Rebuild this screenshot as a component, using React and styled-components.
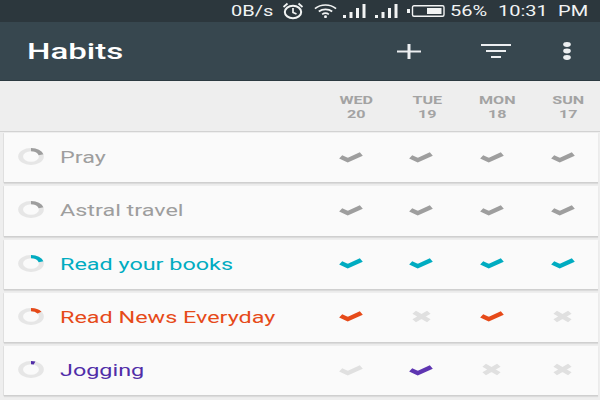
import React from "react";
import styled, { createGlobalStyle } from "styled-components";

const Global = createGlobalStyle`
  html, body { margin: 0; padding: 0; background: #eeeeee; }
  body { font-family: Roboto, "Liberation Sans", sans-serif; }
`;

const Screen = styled.div`
  width: 600px;
  height: 400px;
  overflow: hidden;
  background: #eeeeee;
  display: flex;
  flex-direction: column;
`;

const StatusBar = styled.div`
  height: 22px;
  flex: none;
  background: #2c373d;
  color: #f2f4f4;
  display: flex;
  align-items: center;
  justify-content: flex-end;
  padding-right: 11px;
  font-size: 14px;
  white-space: nowrap;
`;

const StatusText = styled.span`
  display: block;
  flex: none;
  width: ${(p) => p.$w}px;
  margin-left: ${(p) => p.$ml || 0}px;
  transform: scaleX(1.43);
  transform-origin: left center;
`;

const StatusIcon = styled.svg`
  margin-left: ${(p) => p.$ml || 0}px;
  flex: none;
  display: block;
`;

const Toolbar = styled.div`
  height: 58px;
  flex: none;
  background: #37474f;
  border-bottom: 1px solid #2c3a41;
  display: flex;
  align-items: center;
  padding-left: 26.5px;
`;

const Title = styled.div`
  color: #ffffff;
  font-size: 22px;
  font-weight: 500;
  flex: 1;
  transform: scaleX(1.5);
  transform-origin: left center;
`;

const ToolButton = styled.svg`
  flex: none;
  display: block;
  margin-right: ${(p) => p.$mr}px;
`;

const DayHeader = styled.div`
  height: 51px;
  flex: none;
  display: flex;
  align-items: center;
  padding-left: 321px;
  padding-top: 1px;
  box-sizing: border-box;
  border-bottom: 1px solid #d2d2d2;
`;

const Day = styled.div`
  width: 70.5px;
  flex: none;
  text-align: center;
  color: #a3a3a3;
  font-size: 11.5px;
  font-weight: 700;
  line-height: 14px;
  transform: scaleX(1.4);
`;

const List = styled.div`
  display: flex;
  flex-direction: column;
  gap: 3px;
  padding: 1px 2px 0 4px;
`;

const Card = styled.div`
  height: 50.25px;
  flex: none;
  background: #fafafa;
  border-bottom: 1px solid #cfcfcf;
  box-shadow: 0 1px 1px rgba(0, 0, 0, 0.08), -1px 0 0 #e2e2e2;
  box-sizing: border-box;
  display: flex;
  align-items: center;
  padding-left: 14px;
`;

const Ring = styled.svg`
  flex: none;
  display: block;
  margin-top: -2px;
`;

const Name = styled.div`
  flex: 1;
  margin-left: 16px;
  margin-top: -1px;
  font-size: 17px;
  color: ${(p) => p.$color};
  transform: scaleX(1.375);
  transform-origin: left center;
`;

const Cell = styled.div`
  width: 70.7px;
  flex: none;
  display: flex;
  justify-content: center;
`;

const Mark = styled.svg`
  display: block;
  margin-top: -2px;
`;

const GREY = "#9e9e9e";
const OFF = "#e0e0e0";

const Check = ({ color }) => (
  <Mark width="24" height="14" viewBox="0 0 17 14" preserveAspectRatio="none">
    <path d="M1.200 6.800 L6.200 10.200 L15.800 4" fill="none" stroke={color} strokeWidth="3.900" />
  </Mark>
);

const Cross = () => (
  <Mark width="19" height="13" viewBox="0 0 13 13" preserveAspectRatio="none">
    <path d="M1.500 2.300 L11.500 10.700 M11.500 2.300 L1.500 10.700" fill="none" stroke={OFF} strokeWidth="3.800" />
  </Mark>
);

const Progress = ({ color, angle }) => {
  const a = ((angle - 90) * Math.PI) / 180;
  const x1 = 8.5 + 6.8 * Math.cos(a);
  const y1 = 8.5 + 6.8 * Math.sin(a);
  return (
    <Ring width="26" height="17" viewBox="0 0 17 17" preserveAspectRatio="none">
      <circle cx="8.500" cy="8.500" r="6.800" fill="none" stroke="#e6e6e6" strokeWidth="3.200" />
      <path d={`M8.500 1.700 A6.800 6.800 0 0 1 ${x1} ${y1}`} fill="none" stroke={color} strokeWidth="3.200" />
    </Ring>
  );
};

const habits = [
  { name: "Pray", color: "#9e9e9e", ring: "#9e9e9e", angle: 75, marks: "cccc", on: GREY },
  { name: "Astral travel", color: "#9e9e9e", ring: "#9e9e9e", angle: 75, marks: "cccc", on: GREY },
  { name: "Read your books", color: "#00acc1", ring: "#00acc1", angle: 75, marks: "cccc", on: "#00acc1" },
  { name: "Read News Everyday", color: "#e64a19", ring: "#e64a19", angle: 55, marks: "cxcx", on: "#e64a19" },
  { name: "Jogging", color: "#512da8", ring: "#512da8", angle: 20, marks: "lcxx", on: "#5e35b1" },
];

const days = [
  ["WED", 20],
  ["TUE", 19],
  ["MON", 18],
  ["SUN", 17],
];

const Bars = () => (
  <path d="M1 11h3v3H1zM7.500 8h3v6h-3zM14 4h3v10h-3zM20.500 0h3v14h-3z" fill="#f2f4f4" />
);

export default function App() {
  return (
    <Screen>
      <Global />
      <StatusBar>
        <StatusText $w={45}>0B/s</StatusText>
        <StatusIcon $ml={6} width="22" height="18" viewBox="0 0 22 18">
          <ellipse cx="11" cy="10" rx="8.200" ry="6.200" fill="none" stroke="#f2f4f4" strokeWidth="2" />
          <path d="M11 6v4.400l3.500 1.600M1.500 5 5.500 1.500M20.500 5 16.500 1.500" fill="none" stroke="#f2f4f4" strokeWidth="1.700" />
        </StatusIcon>
        <StatusIcon $ml={10} width="23" height="14" viewBox="0 0 24 14">
          <path d="M1 4.500C7 -.5 17 -.5 23 4.500M5 7.500C9 4.500 15 4.500 19 7.500M8.500 10.500C10.500 9 13.500 9 15.500 10.500" fill="none" stroke="#f2f4f4" strokeWidth="1.800" />
          <circle cx="12" cy="13" r="1.500" fill="#f2f4f4" />
        </StatusIcon>
        <StatusIcon $ml={5} width="24" height="14" viewBox="0 0 24 14"><Bars /></StatusIcon>
        <StatusIcon $ml={8} width="24" height="14" viewBox="0 0 24 14"><Bars /></StatusIcon>
        <StatusIcon $ml={9} width="38" height="12" viewBox="0 0 38 12">
          <path d="M0 4h3v4H0z" fill="#f2f4f4" />
          <rect x="5.500" y=".8" width="31.500" height="10.400" rx="1.500" fill="none" stroke="#f2f4f4" strokeWidth="1.400" />
          <rect x="20" y="3" width="14.500" height="6" fill="#f2f4f4" />
        </StatusIcon>
        <StatusText $w={40} $ml={5}>56%</StatusText>
        <StatusText $w={52} $ml={8}>10:31</StatusText>
        <StatusText $w={31} $ml={8}>PM</StatusText>
      </StatusBar>

      <Toolbar>
        <Title>Habits</Title>
        <ToolButton $mr={60} width="24" height="15" viewBox="0 0 24 15">
          <path d="M0 7.500h24" stroke="#eceff1" strokeWidth="2" />
          <path d="M12 0v15" stroke="#eceff1" strokeWidth="3" />
        </ToolButton>
        <ToolButton $mr={52} width="30" height="14" viewBox="0 0 30 14">
          <path d="M0 1h30M5 7h20M10 13h10" stroke="#eceff1" strokeWidth="2" />
        </ToolButton>
        <ToolButton $mr={29} width="8" height="18" viewBox="0 0 8 18">
          <ellipse cx="4" cy="2.500" rx="3.800" ry="2.400" fill="#eceff1" />
          <ellipse cx="4" cy="9" rx="3.800" ry="2.400" fill="#eceff1" />
          <ellipse cx="4" cy="15.500" rx="3.800" ry="2.400" fill="#eceff1" />
        </ToolButton>
      </Toolbar>

      <DayHeader>
        {days.map(([d, n]) => (
          <Day key={d}>
            {d}
            <br />
            {n}
          </Day>
        ))}
      </DayHeader>

      <List>
        {habits.map((h) => (
          <Card key={h.name}>
            <Progress color={h.ring} angle={h.angle} />
            <Name $color={h.color}>{h.name}</Name>
            {[...h.marks].map((m, i) => (
              <Cell key={i}>
                {m === "c" && <Check color={h.on} />}
                {m === "l" && <Check color={OFF} />}
                {m === "x" && <Cross />}
              </Cell>
            ))}
          </Card>
        ))}
      </List>
    </Screen>
  );
}
